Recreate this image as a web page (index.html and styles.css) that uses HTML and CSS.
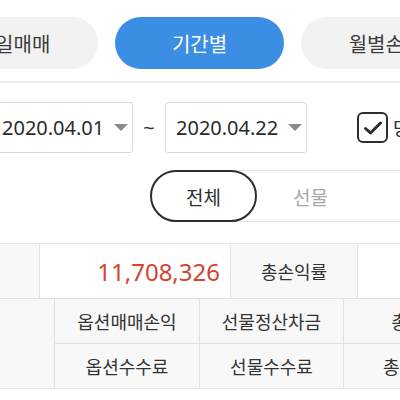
FILE: index.html
```html
<!DOCTYPE html>
<html lang="ko">
<head>
<meta charset="utf-8">
<link rel="stylesheet" href="styles.css">
</head>
<body>
<div class="tabs">
  <div class="tab">당일매매</div>
  <div class="tab active">기간별</div>
  <div class="tab">월별손익</div>
</div>
<div class="dates">
  <div class="datebox"><span>2020.04.01</span><i class="arrow"></i></div>
  <div class="tilde">~</div>
  <div class="datebox"><span>2020.04.22</span><i class="arrow"></i></div>
  <div class="check">
    <svg width="20" height="16" viewBox="0 0 20 16"><path d="M2.5 8.5 L7.5 13 L17.5 3" fill="none" stroke="#2b2b2b" stroke-width="3" stroke-linecap="round" stroke-linejoin="round"/></svg>
  </div>
  <div class="checklabel">당일</div>
</div>
<div class="segwrap">
  <div class="seg">
    <div class="segitem on">전체</div>
    <div class="segitem">선물</div>
    <div class="segitem">옵션</div>
  </div>
</div>
<div class="row1">
  <div class="cell lab w127">총손익</div>
  <div class="cell val w191">11,708,326</div>
  <div class="cell lab w127">총손익률</div>
  <div class="cell val w191"></div>
</div>
<div class="row2">
  <div class="cell lab side">손익</div>
  <div class="grid">
    <div class="cell lab g">옵션매매손익</div>
    <div class="cell lab g">선물정산차금</div>
    <div class="cell lab g">총손익</div>
    <div class="cell lab g">옵션수수료</div>
    <div class="cell lab g">선물수수료</div>
    <div class="cell lab g">총수수료</div>
  </div>
</div>
</body>
</html>
```

FILE: styles.css
```css
html, body {
  margin: 0;
  padding: 0;
  background: #fff;
  overflow: hidden;
  width: 400px;
  height: 400px;
}
body {
  font-family: "Noto Sans CJK KR", "Noto Sans", sans-serif;
  color: #2e2e2e;
}
.tabs {
  display: flex;
  gap: 17px;
  margin-left: -71px;
  padding-top: 17px;
  padding-bottom: 12px;
  border-bottom: 2px solid #ececec;
  width: 600px;
}
.tab {
  flex: 0 0 169px;
  height: 52px;
  border-radius: 26px;
  background: #f2f2f2;
  display: flex;
  align-items: center;
  justify-content: center;
  font-size: 20px;
  color: #3a3a3a;
}
.tab.active {
  background: #3b8ee3;
  color: #fff;
}
.dates {
  display: flex;
  align-items: center;
  margin-top: 19px;
  margin-left: -9px;
  width: 600px;
  height: 51px;
}
.datebox {
  flex: 0 0 142px;
  box-sizing: border-box;
  height: 51px;
  border: 1px solid #d9d9d9;
  border-radius: 3px;
  display: flex;
  align-items: center;
  padding-left: 10px;
  font-family: "Noto Sans", Roboto, sans-serif;
  font-size: 20px;
  color: #2b2b2b;
}
.datebox span { flex: 0 0 auto; }
.arrow {
  width: 0;
  height: 0;
  border-left: 7px solid transparent;
  border-right: 7px solid transparent;
  border-top: 7px solid #8a8a8a;
  margin-left: 10px;
}
.tilde {
  width: 32px;
  text-align: center;
  font-size: 20px;
  font-family: "Noto Sans", sans-serif;
  color: #333;
}
.check {
  margin-left: 50px;
  width: 31px;
  height: 31px;
  box-sizing: border-box;
  border: 2.5px solid #2e2e2e;
  border-radius: 6px;
  display: flex;
  align-items: center;
  justify-content: center;
}
.checklabel {
  margin-left: 5px;
  font-size: 19px;
  color: #2e2e2e;
}
.segwrap {
  margin-top: 17px;
  padding-left: 150px;
  width: 600px;
}
.seg {
  display: flex;
  border-top: 1px solid #e4e4e4;
  border-bottom: 1px solid #e4e4e4;
  border-radius: 26px 0 0 26px;
  height: 50px;
}
.segitem {
  flex: 0 0 107px;
  box-sizing: border-box;
  height: 52px;
  margin-top: -1px;
  display: flex;
  align-items: center;
  justify-content: center;
  font-size: 19px;
  color: #a8a8a8;
}
.segitem.on {
  border: 2px solid #2e2e2e;
  border-radius: 26px;
  color: #2e2e2e;
  background: #fff;
}
.row1 {
  display: flex;
  margin-top: 21px;
  margin-left: -87px;
  width: 700px;
  border-top: 1px solid #e2e2e2;
  border-bottom: 1px solid #e2e2e2;
}
.cell {
  box-sizing: border-box;
  display: flex;
  align-items: center;
  justify-content: center;
  font-size: 18px;
}
.row1 .cell {
  height: 54px;
  border-right: 1px solid #e2e2e2;
}
.w127 { flex: 0 0 127px; }
.w191 { flex: 0 0 191px; }
.lab { background: #f8f8f8; color: #333; }
.val {
  background: #fff;
  justify-content: flex-end;
  padding-right: 10px;
  font-family: "Noto Sans", Roboto, sans-serif;
  font-size: 24px;
  color: #d4442f;
}
.row2 {
  display: flex;
  margin-left: -89px;
  width: 700px;
  border-bottom: 1px solid #e2e2e2;
}
.side {
  flex: 0 0 144px;
  height: 89px;
  border-right: 1px solid #e2e2e2;
}
.grid {
  display: grid;
  grid-template-columns: 144px 143px 144px;
  grid-auto-rows: 44px;
  row-gap: 1px;
  column-gap: 1px;
  background: #e2e2e2;
}
.g {
  height: 44px;
}
```
